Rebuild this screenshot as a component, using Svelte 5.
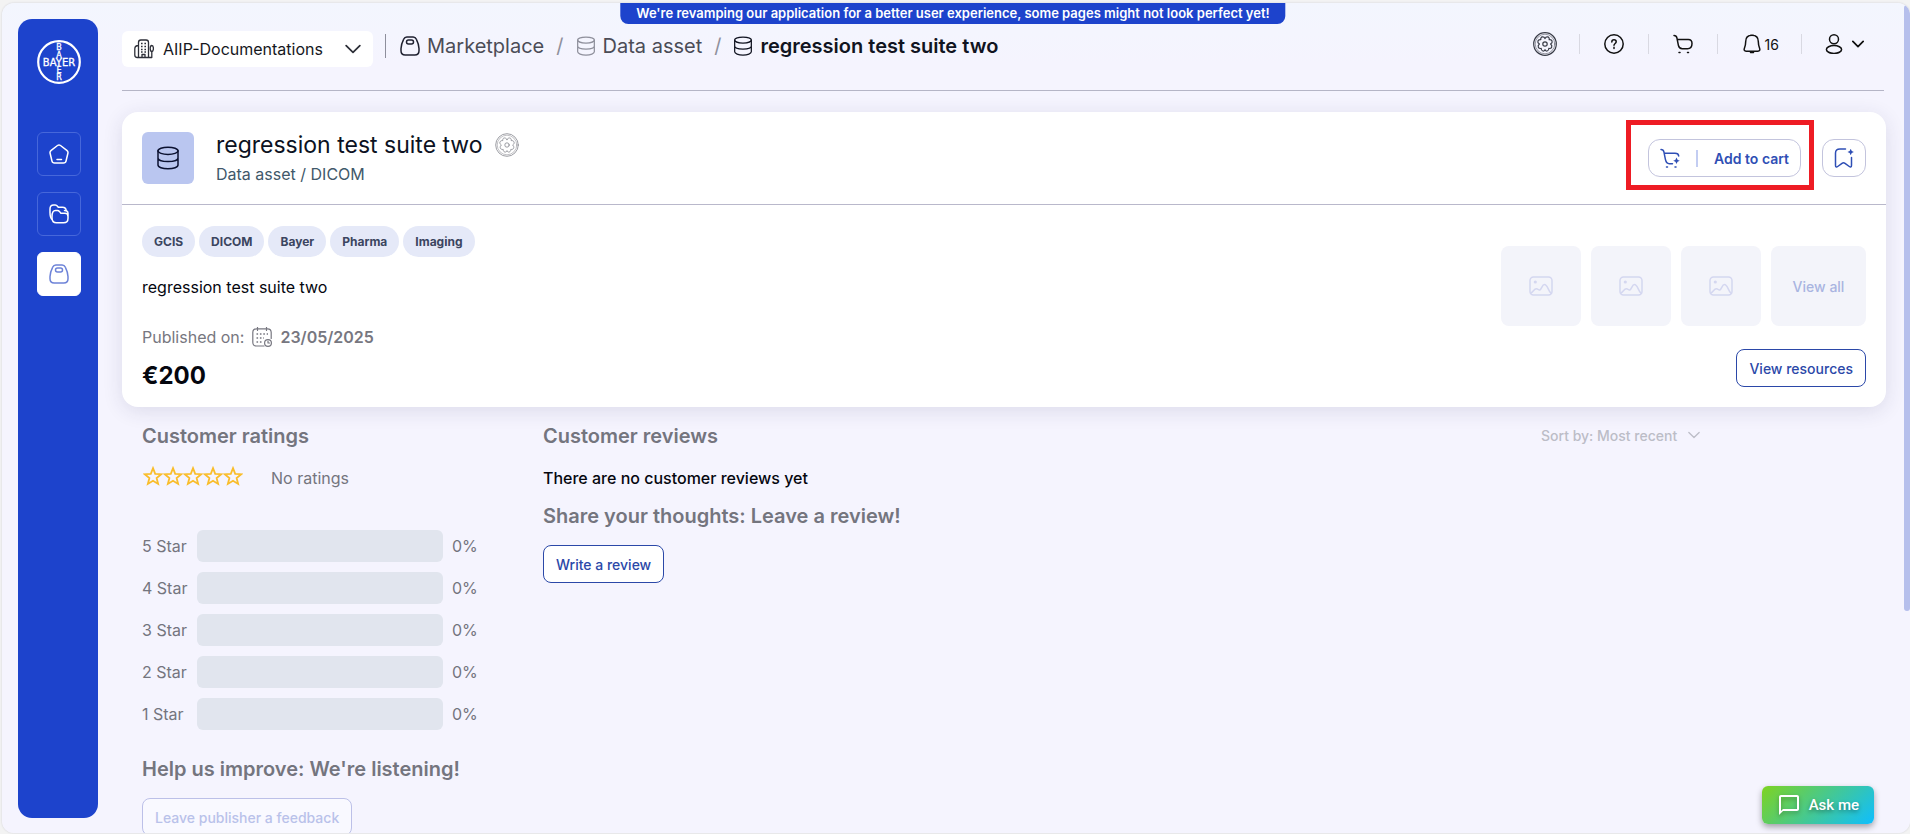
<!-- App.svelte -->
<script lang="ts">
  let tags: string[] = ['GCIS', 'DICOM', 'Bayer', 'Pharma', 'Imaging'];

  let ratings = [
    { stars: 5, percent: 0 },
    { stars: 4, percent: 0 },
    { stars: 3, percent: 0 },
    { stars: 2, percent: 0 },
    { stars: 1, percent: 0 }
  ];

  let project = $state('AIIP-Documentations');
  let sortBy = $state('recent');
</script>

{#snippet database(size: number)}
  <svg class="icon" width={size} height={size} viewBox="0 0 24 24">
    <ellipse cx="12" cy="4.8" rx="10" ry="3.6" />
    <path d="M2 4.8v14.2c0 2.1 4.4 3.8 10 3.8s10-1.7 10-3.8V4.8M2 12c0 2.1 4.4 3.6 10 3.6s10-1.5 10-3.6" />
  </svg>
{/snippet}

{#snippet bag(size: number)}
  <svg class="icon" width={size} height={size} viewBox="0 0 20 20">
    <path d="M6.8 1h6.4c1.5 0 2.5.8 3.2 2.3 1.8 3.6 2.6 6 2.6 9.2v2.3c0 2.7-1.5 4.2-4.2 4.2H5.200C2.500 19 1 17.500 1 14.800v-2.300c0-3.200.8-5.600 2.600-9.200C4.300 1.800 5.300 1 6.800 1z" />
    <rect x="6.5" y="4" width="7" height="4" rx="2" />
  </svg>
{/snippet}

{#snippet emblem(size: number)}
  <svg class="icon emblem" width={size} height={size} viewBox="0 0 24 24">
    <circle cx="12" cy="12" r="11.3" />
    <circle cx="12" cy="12" r="9.8" class="thin" />
    <circle cx="12" cy="12" r="2.2" />
    <path d="M12 6.6C11 4 7.2 4.400 7.800 7.600C4.800 7.200 3.600 10.400 6.400 12C4 14 5.400 17 8.200 16.400C8 19.400 11.400 20 12 17.600C12.600 20 16 19.400 15.800 16.400C18.600 17 20 14 17.600 12C20.400 10.400 19.200 7.200 16.200 7.600C16.800 4.400 13 4 12 6.600z" />
  </svg>
{/snippet}

{#snippet chevron(size: number)}
  <svg class="icon chevron" width={size} height={size} viewBox="0 0 14 14">
    <path d="M1 4l6 6 6-6" />
  </svg>
{/snippet}

<div class="window">
  <div class="banner">
    We're revamping our application for a better user experience, some pages might not look perfect yet!
  </div>

  <!-- Sidebar -->
  <nav class="sidebar" aria-label="Main">
    <svg class="logo" width="44" height="44" viewBox="0 0 44 44">
      <circle cx="22" cy="22" r="20.8" />
      <text class="across" x="22" y="25.5">BAYER</text>
      <text x="22" y="10">B</text>
      <text x="22" y="17.5">A</text>
      <text x="22" y="32.5">E</text>
      <text x="22" y="40">R</text>
    </svg>
    <a href="#home" class="nav-item" aria-label="Home">
      <svg class="icon" width="20" height="20" viewBox="0 0 20 20">
        <path d="M8.500 1.500c.9-.7 2.100-.7 3 0l6.300 4.900c1 .8 1.400 1.700 1.100 2.900l-1.800 7.500c-.3 1.400-1.200 2.200-2.700 2.200H5.600c-1.500 0-2.400-.8-2.700-2.200L1.100 9.300C.8 8.100 1.200 7.200 2.200 6.400zM8 15.500h4.500" />
      </svg>
    </a>
    <a href="#projects" class="nav-item" aria-label="Projects">
      <svg class="icon" width="20" height="20" viewBox="0 0 20 20">
        <path d="M3.200 15.500C1.800 14.500 1 12 1 8.500V5c0-2.600 1.200-4 3.600-4h1.600c1 0 1.700.4 2.300 1.200l.8 1h4.200c2.300 0 3.500 1 3.700 3.300" />
        <path d="M3 12.500c0-3.500.3-6 3.500-6h2c.8 0 1.400.3 1.900.9l1.500 1.900H16c2.300 0 3 1 3 3.200v1.700c0 3.200-1.400 4.600-4.500 4.600h-7C4.300 18.800 3 17 3 14zM15.500 6.500c2 0 3.500.8 3.500 3v4" />
      </svg>
    </a>
    <a href="#marketplace" class="nav-item active" aria-label="Marketplace">{@render bag(20)}</a>
  </nav>

  <main>
    <!-- Top bar -->
    <header class="topbar">
      <div class="project">
        <svg class="icon building" width="20" height="20" viewBox="0 0 20 20">
          <path d="M4.500 18.500v-15c0-1.600.8-2.500 2.400-2.500h5.200c1.600 0 2.400.9 2.400 2.500v15zM4.500 6.500C1.500 6.500.8 8 .8 10v6c0 1.700.8 2.500 2.500 2.500h14.500M8 18.500v-3h3v3M17.800 18.500v-6" />
          <ellipse cx="17.800" cy="9.500" rx="1.600" ry="3" />
          <path class="dots" d="M7 4.500h6M7 7.500h6M7 10.500h6M7 13h6" />
        </svg>
        <select aria-label="Project" bind:value={project}>
          <option>AIIP-Documentations</option>
        </select>
        {@render chevron(16)}
      </div>
      <nav class="breadcrumb" aria-label="Breadcrumb">
        <a href="#marketplace"><span class="dark">{@render bag(20)}</span>Marketplace</a>
        <span class="slash">/</span>
        <a href="#data-asset"><span class="faded">{@render database(20)}</span>Data asset</a>
        <span class="slash">/</span>
        <a href="#asset" class="current" aria-current="page">{@render database(20)}regression test suite two</a>
      </nav>
      <div class="tools">
        <button aria-label="Assistant">{@render emblem(24)}</button>
        <button aria-label="Help">
          <svg class="icon" width="20" height="20" viewBox="0 0 20 20">
            <circle cx="10" cy="10" r="9.200" />
            <path d="M7.800 8c0-1.300.9-2.200 2.200-2.200s2.200.8 2.200 2c0 1.700-2.200 1.700-2.200 3.500M10 13.200v1.300" />
          </svg>
        </button>
        <button aria-label="Cart">
          <svg class="icon" width="20" height="20" viewBox="0 0 20 20">
            <path d="M1 1.500c1.800 0 2.600.7 2.900 2.300l1.500 7.600c.5 2.400 1.500 3.300 3.900 3.300h5.200c2.800 0 4.500-1.900 4.500-5.200 0-3.200-1.100-4-3.700-4H4.200" />
            <path d="M6 18.500h1M14.500 18.500h1" />
          </svg>
        </button>
        <button aria-label="Notifications">
          <svg class="icon" width="20" height="20" viewBox="0 0 20 20">
            <path d="M10 1.200c-4 0-6.300 2.600-6.300 6.300 0 3-.4 4.500-1.300 6.800-.7 1.800 0 2.900 1.700 2.900h11.800c1.700 0 2.400-1.100 1.700-2.900-.9-2.300-1.300-3.800-1.300-6.800 0-3.700-2.300-6.300-6.300-6.300zM8.700 1.200h2.600M8.500 18.500h3" />
          </svg>
          <span>16</span>
        </button>
        <button class="user" aria-label="Account">
          <svg class="icon" width="20" height="20" viewBox="0 0 20 20">
            <circle cx="10" cy="5.300" r="4.500" />
            <ellipse cx="10" cy="15.500" rx="7.600" ry="3.900" />
          </svg>
          {@render chevron(12)}
        </button>
      </div>
    </header>

    <!-- Asset card -->
    <section class="card">
      <div class="card-header">
        <div class="tile">{@render database(24)}</div>
        <div class="heading">
          <h1>regression test suite two {@render emblem(24)}</h1>
          <p>Data asset / DICOM</p>
        </div>
        <div class="actions">
          <div class="highlight">
            <button class="pill">
              <svg class="icon" width="20" height="20" viewBox="0 0 20 20">
                <path d="M1 1.500c1.800 0 2.600.7 2.900 2.300l1.500 7.600c.5 2.400 1.500 4.300 3.900 4.300h3.200M4.200 5.300H15c2.600 0 3.600 1 3.700 2.700" />
                <path d="M6.500 19h1M15 19h1" />
                <path class="solid" d="M16.500 9.500q.5 2.800 3.300 3.300-2.800.5-3.300 3.300-.5-2.800-3.300-3.300 2.800-.5 3.300-3.300z" />
              </svg>
              <span class="divider"></span>
              Add to cart
            </button>
          </div>
          <button class="pill" aria-label="Bookmark">
            <svg class="icon" width="20" height="20" viewBox="0 0 20 20">
              <path d="M11.500 1H6C3 1 1.500 2.200 1.500 5v12.200c0 1.800.8 2.300 2.200 1.300l4.300-3.200c1.200-.9 1.800-.9 3 0l4.300 3.200c1.400 1 2.200.5 2.200-1.300V9.500" />
              <path class="solid" d="M16.700.8q.5 2.800 3.200 3.200-2.700.5-3.200 3.200-.5-2.700-3.200-3.200 2.700-.4 3.200-3.200z" />
            </svg>
          </button>
        </div>
      </div>
      <div class="card-body">
        <div class="info">
          <div class="tags">
            {#each tags as tag}
              <span class="tag">{tag}</span>
            {/each}
          </div>
          <p class="description">regression test suite two</p>
          <div class="published">
            <span>Published on:</span>
            <svg class="icon" width="20" height="20" viewBox="0 0 20 20">
              <path d="M12 19H4.500C2 19 .8 17.800.8 15.300V5.500C.8 3 2 1.800 4.500 1.800h11C18 1.800 19.200 3 19.200 5.500v6M5.500.3v3.200M14.500.3v3.200" />
              <path class="dots" d="M4.500 7h11.500M4.500 11h7.500M4.500 15h6" />
              <circle cx="16" cy="16" r="3.400" />
              <path d="M16 14v2h1.500" />
            </svg>
            <time datetime="2025-05-23">23/05/2025</time>
          </div>
          <div class="price">€200</div>
        </div>
        <div class="media">
          <div class="thumbs">
            {#each [1, 2, 3] as item (item)}
              <div class="thumb">
                <svg class="icon" width="24" height="20" viewBox="0 0 24 20">
                  <rect x="1" y="1" width="22" height="18" rx="3.500" />
                  <circle class="solid" cx="6.300" cy="6" r="1.600" />
                  <path d="M2 17c2.500-1.500 3-4.300 5.300-4.300 2 0 2 1.800 3.500 1.300 2-.8 2.200-5.500 4.700-5.500 3 0 3.500 6 6.500 8.800" />
                </svg>
              </div>
            {/each}
            <button class="thumb view-all">View all</button>
          </div>
          <button class="outlined">View resources</button>
        </div>
      </div>
    </section>

    <!-- Ratings and reviews -->
    <div class="feedback">
      <section class="ratings">
        <h2>Customer ratings</h2>
        <div class="summary">
          <div class="stars">
            {#each ratings as rating (rating.stars)}
              <svg width="20" height="20" viewBox="0 0 20 20">
                <path d="M10 2.200l2.200 5.600 6 .4-4.600 3.800 1.500 5.900L10 14.700l-5.100 3.200L6.400 12 1.800 8.200l6-.4z" />
              </svg>
            {/each}
          </div>
          <span>No ratings</span>
        </div>
        <ul>
          {#each ratings as rating (rating.stars)}
            <li>
              <span class="label">{rating.stars} Star</span>
              <div class="bar"><div class="fill" style="width: {rating.percent}%"></div></div>
              <span>{rating.percent}%</span>
            </li>
          {/each}
        </ul>
        <h2>Help us improve: We're listening!</h2>
        <button class="outlined" disabled>Leave publisher a feedback</button>
      </section>

      <section class="reviews">
        <h2>Customer reviews</h2>
        <p>There are no customer reviews yet</p>
        <h2>Share your thoughts: Leave a review!</h2>
        <button class="outlined">Write a review</button>
      </section>

      <div class="sort">
        <select aria-label="Sort reviews" bind:value={sortBy}>
          <option value="recent">Sort by: Most recent</option>
        </select>
        {@render chevron(12)}
      </div>
    </div>
  </main>

  <button class="ask">
    <svg width="24" height="24" viewBox="0 0 24 24">
      <path d="M20 2H4c-1.100 0-2 .9-2 2v18l4-4h14c1.100 0 2-.9 2-2V4c0-1.100-.9-2-2-2zm0 14H6l-2 2V4h16v12z" />
    </svg>
    Ask me
  </button>
  <div class="scroll-thumb"></div>
</div>

<style>
  :global(body) {
    background: #f3f3f3;
    font-family: Inter, 'Liberation Sans', sans-serif;
    font-size: 16px;
    color: #05070f;
    overflow: hidden;
  }

  .window {
    position: relative;
    display: flex;
    box-sizing: border-box;
    height: calc(100vh - 4px);
    margin: 3px 0 1px 2px;
    padding: 16px 24px 0 16px;
    gap: 24px;
    border-radius: 12px;
    background: linear-gradient(#f3f6fe, #f5f4fe 60px);
    box-shadow: 0 0 2px #c9c9d0;
    overflow: hidden;
  }

  button,
  select {
    font: inherit;
    color: inherit;
    border: 0;
    padding: 0;
    background: none;
    cursor: pointer;
  }

  a {
    color: inherit;
    text-decoration: none;
  }

  h1,
  h2,
  p,
  ul {
    margin: 0;
    padding: 0;
    font-weight: 400;
  }

  .icon {
    flex: none;
    fill: none;
    stroke: currentColor;
    stroke-width: 1.5;
    stroke-linecap: round;
    stroke-linejoin: round;
  }

  .icon .solid {
    fill: currentColor;
    stroke: none;
  }

  .icon .dots {
    stroke-width: 1.6;
    stroke-linecap: butt;
    stroke-dasharray: 1.6 1.8;
  }

  .emblem {
    stroke-width: 1.2;
    color: #3a3d48;
  }

  .emblem .thin {
    stroke-width: 0.5;
  }

  /* Banner */
  .banner {
    position: absolute;
    top: 0;
    left: calc(50% - 3px);
    transform: translateX(-50%);
    padding: 0 16px;
    border-radius: 0 0 8px 8px;
    background: #1d43cc;
    color: #fff;
    font-size: 13px;
    font-weight: 600;
    line-height: 21px;
    white-space: nowrap;
  }

  /* Sidebar */
  .sidebar {
    display: flex;
    flex: none;
    flex-direction: column;
    align-items: center;
    gap: 16px;
    box-sizing: border-box;
    width: 80px;
    height: calc(100vh - 35px);
    padding: 21px 0 0 2px;
    border-radius: 14px;
    background: #1d43cc;
  }

  .logo {
    margin-bottom: 32px;
  }

  .logo circle {
    fill: none;
    stroke: #fff;
    stroke-width: 2.2;
  }

  .logo text {
    fill: #fff;
    stroke: #fff;
    stroke-width: 0.3;
    font-family: 'DejaVu Sans', sans-serif;
    font-size: 8px;
    text-anchor: middle;
  }

  .logo .across {
    font-size: 10px;
  }

  .nav-item {
    display: grid;
    place-items: center;
    box-sizing: border-box;
    width: 44px;
    height: 44px;
    border: 1px solid #4667da;
    border-radius: 6px;
    color: #fff;
  }

  .nav-item.active {
    border-color: #fff;
    background: #fff;
    color: #6d83d8;
  }

  main {
    flex: 1;
    min-width: 0;
  }

  /* Top bar */
  .topbar {
    display: flex;
    align-items: center;
    height: 72px;
    box-sizing: border-box;
    padding: 0 20px 13px 0;
    margin-right: 2px;
    border-bottom: 1px solid #b5b5c6;
  }

  .project {
    display: flex;
    align-items: center;
    margin-top: 2px;
    padding: 0 12px;
    height: 36px;
    border-radius: 6px;
    background: #fff;
    color: #2d2f38;
  }

  .project .building {
    stroke-width: 1.3;
  }

  .project select {
    width: 191px;
    padding-left: 9px;
    color: #16171d;
  }

  select {
    appearance: none;
    outline: none;
  }

  .breadcrumb {
    display: flex;
    align-items: center;
    gap: 12px;
    height: 24px;
    margin: -4px 0 0 12px;
    padding-left: 14px;
    border-left: 1px solid #8e8f9c;
    color: #4b4c56;
    font-size: 20px;
    white-space: nowrap;
  }

  .breadcrumb a {
    display: flex;
    align-items: center;
    gap: 7px;
  }

  .breadcrumb .current {
    color: #111421;
    font-weight: 600;
  }

  .breadcrumb span {
    display: flex;
  }

  .breadcrumb .dark {
    color: #1f2130;
  }

  .breadcrumb .faded,
  .breadcrumb .slash {
    color: #8f909c;
  }

  .tools {
    display: flex;
    align-items: center;
    margin-left: auto;
    margin-top: -8px;
    color: #111;
  }

  .tools button {
    display: flex;
    align-items: center;
    gap: 3px;
    height: 20px;
    padding: 0 24px;
    border-left: 1px solid #d9d9e2;
    font-size: 14px;
  }

  .tools button:first-child {
    padding: 0 22px;
    border: 0;
  }

  .tools .user {
    gap: 8px;
    padding: 0 0 0 22px;
  }

  .tools .chevron {
    stroke-width: 2;
  }

  .tools span {
    margin-right: -2px;
  }

  /* Asset card */
  .card {
    margin-top: 21px;
    border-radius: 16px;
    background: #fff;
    box-shadow: 0 4px 20px rgba(40, 40, 90, 0.12);
  }

  .card-header {
    display: flex;
    align-items: center;
    padding: 20px;
    border-bottom: 1px solid #b9b8cb;
  }

  .tile {
    display: grid;
    place-items: center;
    width: 52px;
    height: 52px;
    border-radius: 6px;
    background: #bac6f0;
    color: #0b1130;
  }

  .heading {
    margin-left: 22px;
  }

  h1 {
    display: flex;
    align-items: center;
    gap: 12px;
    color: #0c1222;
    font-size: 23px;
    line-height: 26px;
  }

  h1 .emblem {
    stroke-width: 0.8;
    color: #84858d;
  }

  .heading p {
    margin-top: 6px;
    color: #41586a;
    line-height: 20px;
  }

  .actions {
    display: flex;
    gap: 21px;
    margin-left: auto;
  }

  .highlight {
    position: relative;
  }

  .highlight::after {
    content: '';
    position: absolute;
    inset: -19px -13px -13px -22px;
    border: 5px solid #ee1c24;
    pointer-events: none;
  }

  .pill {
    display: flex;
    align-items: center;
    justify-content: center;
    gap: 16px;
    height: 38px;
    padding: 0 11px;
    border: 1px solid #c3c4dd;
    border-radius: 12px;
    color: #2f4fb5;
    font-size: 14px;
    font-weight: 600;
  }

  .divider {
    width: 2px;
    height: 17px;
    background: #c3cdf2;
  }

  .card-body {
    display: flex;
    justify-content: space-between;
    padding: 21px 20px 17px;
  }

  .tags {
    display: flex;
    gap: 4px;
  }

  .tag {
    padding: 0 12px;
    border-radius: 16px;
    background: #e5e9f8;
    color: #3b4560;
    font-size: 12px;
    font-weight: 700;
    line-height: 31px;
  }

  .description {
    margin-top: 20px;
    line-height: 20px;
  }

  .published {
    display: flex;
    align-items: center;
    gap: 8px;
    margin-top: 30px;
    color: #777780;
    line-height: 20px;
  }

  .published time {
    font-weight: 600;
  }

  .published .icon {
    stroke-width: 1.2;
  }

  .price {
    margin-top: 15px;
    font-size: 24px;
    font-weight: 700;
    line-height: 28px;
  }

  .media {
    display: flex;
    flex-direction: column;
    align-items: flex-end;
    justify-content: space-between;
    padding: 20px 0 3px;
  }

  .thumbs {
    display: flex;
    gap: 10px;
  }

  .thumb {
    display: grid;
    place-items: center;
    width: 80px;
    height: 80px;
    border-radius: 8px;
    background: #f3f4fa;
    color: #d4d7f0;
  }

  .view-all {
    width: 95px;
    color: #a9b5e1;
    font-size: 14px;
    font-weight: 500;
  }

  .outlined {
    height: 38px;
    padding: 0 12px;
    border: 1px solid #2b48a8;
    border-radius: 8px;
    background: #fff;
    color: #2b48a8;
    font-size: 14px;
    font-weight: 500;
  }

  .outlined:disabled {
    border-color: #bcc0e8;
    background: #f9f9ff;
    color: #b9c2ea;
  }

  /* Ratings and reviews */
  .feedback {
    display: flex;
    align-items: flex-start;
    padding: 17px 20px 0;
    color: #74757e;
  }

  h2 {
    font-size: 20px;
    font-weight: 600;
    line-height: 24px;
  }

  .ratings {
    width: 401px;
  }

  .summary {
    display: flex;
    align-items: center;
    gap: 28px;
    margin-top: 18px;
    line-height: 24px;
  }

  .stars {
    display: flex;
    padding: 0 0 4px 1px;
  }

  .stars path {
    fill: none;
    stroke: #f9bd2b;
    stroke-width: 1.8;
  }

  .ratings ul {
    display: flex;
    flex-direction: column;
    gap: 10px;
    margin: 40px 0 27px;
    list-style: none;
  }

  .ratings li {
    display: flex;
    align-items: center;
  }

  .label {
    width: 55px;
  }

  .bar {
    width: 246px;
    height: 32px;
    margin-right: 9px;
    border-radius: 6px;
    background: #e1e5ee;
    overflow: hidden;
  }

  .fill {
    height: 100%;
    background: #f9bd2b;
  }

  .ratings .outlined {
    margin-top: 17px;
  }

  .reviews p {
    margin: 18px 0 14px;
    color: #05070f;
    font-weight: 500;
    line-height: 24px;
  }

  .reviews .outlined {
    margin-top: 17px;
  }

  .sort {
    display: flex;
    align-items: center;
    gap: 10px;
    height: 22px;
    margin: 0 166px 0 auto;
    color: #bcbdc7;
    font-size: 14px;
    font-weight: 500;
  }

  .ask {
    position: absolute;
    right: 36px;
    bottom: 9px;
    display: flex;
    align-items: center;
    gap: 8px;
    height: 38px;
    padding: 0 15px;
    border-radius: 6px;
    background: linear-gradient(135deg, #7ed321, #0ebeff);
    box-shadow: 0 3px 6px rgba(0, 0, 0, 0.35);
    color: #fff;
    font-family: Roboto, sans-serif;
    font-size: 15px;
    font-weight: 500;
    text-shadow: 0 2px 4px rgba(0, 0, 0, 0.4);
  }

  .ask svg {
    fill: #fff;
    filter: drop-shadow(0 2px 2px rgba(0, 0, 0, 0.3));
  }

  .scroll-thumb {
    position: absolute;
    top: 2px;
    right: 0;
    width: 6px;
    height: 73%;
    border-radius: 3px;
    background: #b6bfec;
  }
</style>
